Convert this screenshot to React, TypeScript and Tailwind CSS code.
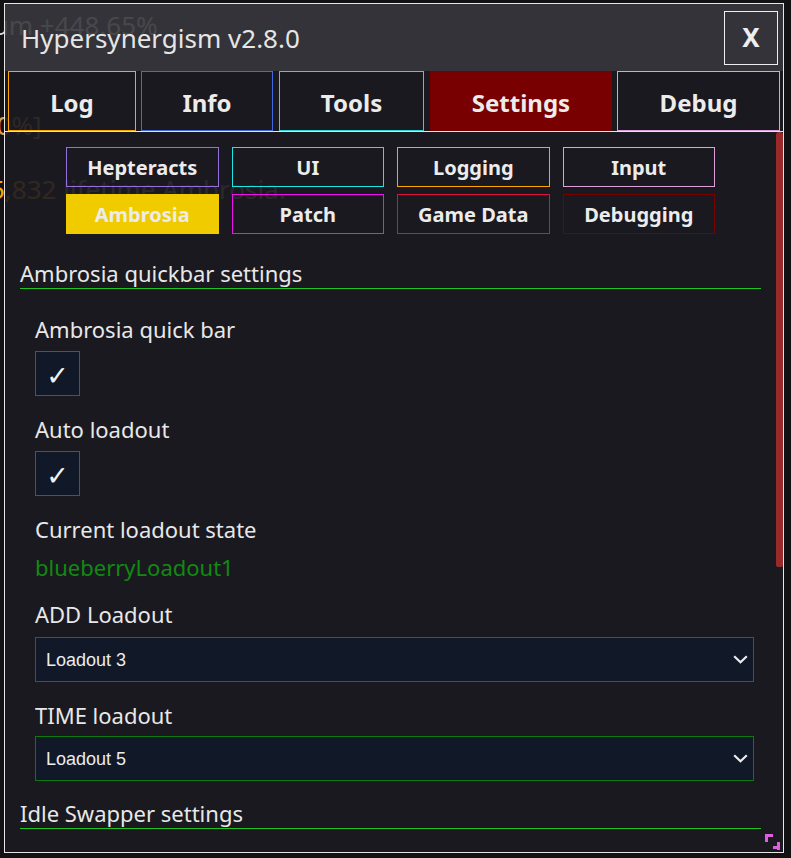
import React from "react";

const tabs = [
  { label: "Log", w: "w-[128px]", ml: "ml-0", cls: "border border-[#ffa500]" },
  { label: "Info", w: "w-[132px]", ml: "ml-[5px]", cls: "border border-[#4169e1]" },
  { label: "Tools", w: "w-[145px]", ml: "ml-[6px]", cls: "border border-[#30d5d5]" },
  { label: "Settings", w: "w-[182px]", ml: "ml-[6px]", cls: "bg-[#790000]" },
  { label: "Debug", w: "w-[163px]", ml: "ml-[5px]", cls: "border border-[#dda0dd]" },
];

const subtabs = [
  { label: "Hepteracts", cls: "border border-[#9370db]" },
  { label: "UI", cls: "border border-[#1ee5e5]" },
  { label: "Logging", cls: "border border-[#ffa500]" },
  { label: "Input", cls: "border border-[#dda0dd]" },
  { label: "Ambrosia", cls: "bg-[#efcb00]" },
  { label: "Patch", cls: "border border-[#ee11ee]" },
  { label: "Game Data", cls: "border border-[#dc143c]" },
  { label: "Debugging", cls: "border border-[#7a0000]" },
];

function Check() {
  return (
    <div className="w-[45px] h-[45px] border border-[#1a7a1a] bg-[#111827] flex items-center justify-center">
      <span className="font-['DejaVu_Sans',sans-serif] text-[27px] leading-none text-[#f2f2f2] pt-[4px]">✓</span>
    </div>
  );
}

function Select({ value }: { value: string }) {
  return (
    <div className="h-[45px] border border-[#0d7a0d] bg-[#111827] flex items-center justify-between pl-[10px] pr-[5px]">
      <span className="font-['Liberation_Sans',Arial,sans-serif] text-[18px] text-[#ececec]">{value}</span>
      <svg width="15" height="9" viewBox="0 0 15 9" fill="none">
        <path d="M1.2 1.2 L7.5 7.3 L13.8 1.2" stroke="#ececec" strokeWidth="2.2" />
      </svg>
    </div>
  );
}

export default function App() {
  return (
    <div className="relative w-[791px] h-[858px] overflow-hidden bg-[#121215] font-['Noto_Sans',sans-serif]">
      {/* underlying page text, visible through the translucent window */}
      <div className="absolute left-[-14px] top-[6px] text-[26px] text-[#d8d8d8] whitespace-nowrap">
        <span className="text-[#4b7bd8]">i</span>um +448.65%
      </div>
      <div className="absolute left-[-12px] top-[106px] text-[26px] text-[#e0a050] whitespace-nowrap">[0%]</div>
      <div className="absolute left-[-10px] top-[170px] text-[26px] text-[#d8b090] whitespace-nowrap">
        <span className="text-[#ffa500]">5,832</span> lifetime Ambrosia.
      </div>

      {/* window */}
      <div className="absolute left-[4px] top-[3px] w-[780px] h-[850px] border border-[#e6e6e6] flex flex-col">
        <div className="h-[67px] shrink-0 bg-[rgba(55,55,61,0.9)] flex items-center justify-between pl-[16px] pr-[5px]">
          <div className="text-[26px] text-[#e6e6e6] leading-[34px]">Hypersynergism v2.8.0</div>
          <div className="w-[54px] h-[54px] border border-[#eeeeee] flex items-center justify-center text-[26px] font-bold text-[#eeeeee]">
            X
          </div>
        </div>

        <div className="flex-1 flex flex-col bg-[rgba(27,26,34,0.91)] min-h-0">
          <div className="h-[61px] shrink-0 flex px-[3px] border-b border-[#e6e6e6]">
            {tabs.map((t) => (
              <div
                key={t.label}
                className={`${t.w} ${t.ml} ${t.cls} h-[60px] flex items-center justify-center text-[24px] font-bold text-[#ececec] pt-[3px]`}
              >
                {t.label}
              </div>
            ))}
          </div>

          <div className="flex-1 flex min-h-0">
            <div className="flex-1 flex flex-col overflow-hidden">
              <div className="pt-[15px]">
                <div className="w-[649px] mx-auto grid grid-cols-4 gap-x-[13px] gap-y-[7px]">
                  {subtabs.map((s) => (
                    <div
                      key={s.label}
                      className={`${s.cls} h-[40px] flex items-center justify-center text-[20px] font-bold text-[#ececec] pt-[2px]`}
                    >
                      {s.label}
                    </div>
                  ))}
                </div>
              </div>

              <div className="mt-[24px] mx-[15px] border-b border-[#22c322] text-[22px] leading-[30px] text-[#e8e8e8]">
                Ambrosia quickbar settings
              </div>

              <div className="pl-[30px] pr-[22px] flex flex-col text-[22px] leading-[30px] text-[#e8e8e8]">
                <div className="mt-[25px]">Ambrosia quick bar</div>
                <div className="mt-[7px]">
                  <Check />
                </div>
                <div className="mt-[18px]">Auto loadout</div>
                <div className="mt-[7px]">
                  <Check />
                </div>
                <div className="mt-[18px]">Current loadout state</div>
                <div className="mt-[8px] text-[#118a11]">blueberryLoadout1</div>
                <div className="mt-[17px]">ADD Loadout</div>
                <div className="mt-[8px]">
                  <Select value="Loadout 3" />
                </div>
                <div className="mt-[18px]">TIME loadout</div>
                <div className="mt-[6px]">
                  <Select value="Loadout 5" />
                </div>
              </div>

              <div className="mt-[17px] mx-[15px] border-b border-[#22c322] text-[22px] leading-[30px] text-[#e8e8e8]">
                Idle Swapper settings
              </div>
            </div>

            <div className="w-[7px] shrink-0 flex flex-col">
              <div className="h-[435px] bg-[#9a2a2a] rounded-t-[3px] rounded-b-[2px]" />
            </div>
          </div>
        </div>

        <svg className="absolute right-[2px] bottom-[2px]" width="16" height="16" viewBox="0 0 16 16">
          <rect x="0" y="0" width="8" height="3" fill="#dd5fe0" />
          <rect x="0" y="0" width="3" height="8" fill="#dd5fe0" />
          <rect x="12" y="8" width="3" height="8" fill="#dd5fe0" />
          <rect x="8" y="12" width="7" height="3" fill="#dd5fe0" />
        </svg>
      </div>
    </div>
  );
}
